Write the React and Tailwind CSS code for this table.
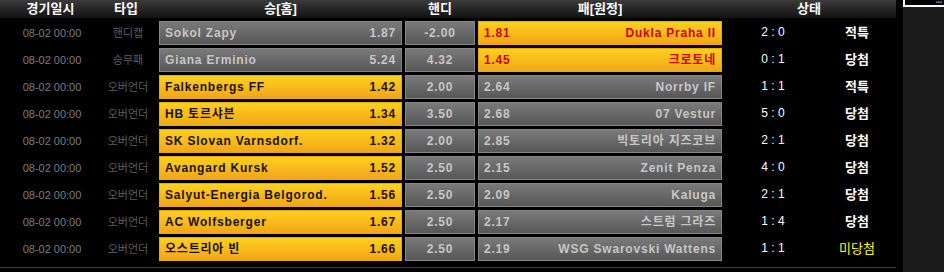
const rows = [
  { date: '08-02 00:00', type: '핸디캡', home: 'Sokol Zapy', ho: '1.87', hd: '-2.00', ao: '1.81', away: 'Dukla Praha II', score: '2 : 0', status: '적특', pick: 'away' },
  { date: '08-02 00:00', type: '승무패', home: 'Giana Erminio', ho: '5.24', hd: '4.32', ao: '1.45', away: '크로토네', score: '0 : 1', status: '당첨', pick: 'away' },
  { date: '08-02 00:00', type: '오버언더', home: 'Falkenbergs FF', ho: '1.42', hd: '2.00', ao: '2.64', away: 'Norrby IF', score: '1 : 1', status: '적특', pick: 'home' },
  { date: '08-02 00:00', type: '오버언더', home: 'HB 토르샤븐', ho: '1.34', hd: '3.50', ao: '2.68', away: '07 Vestur', score: '5 : 0', status: '당첨', pick: 'home' },
  { date: '08-02 00:00', type: '오버언더', home: 'SK Slovan Varnsdorf.', ho: '1.32', hd: '2.00', ao: '2.85', away: '빅토리아 지즈코브', score: '2 : 1', status: '당첨', pick: 'home' },
  { date: '08-02 00:00', type: '오버언더', home: 'Avangard Kursk', ho: '1.52', hd: '2.50', ao: '2.15', away: 'Zenit Penza', score: '4 : 0', status: '당첨', pick: 'home' },
  { date: '08-02 00:00', type: '오버언더', home: 'Salyut-Energia Belgorod.', ho: '1.56', hd: '2.50', ao: '2.09', away: 'Kaluga', score: '2 : 1', status: '당첨', pick: 'home' },
  { date: '08-02 00:00', type: '오버언더', home: 'AC Wolfsberger', ho: '1.67', hd: '2.50', ao: '2.17', away: '스트럼 그라즈', score: '1 : 4', status: '당첨', pick: 'home' },
  { date: '08-02 00:00', type: '오버언더', home: '오스트리아 빈', ho: '1.66', hd: '2.50', ao: '2.19', away: 'WSG Swarovski Wattens', score: '1 : 1', status: '미당첨', pick: 'home' },
]

const gray = 'border border-[#858585] bg-gradient-to-b from-[#7a7a7a] to-[#575757] text-[#c6c6c6]'
const gold = 'border border-[#eaa80e] bg-gradient-to-b from-[#fdd01e] to-[#f2a619]'

function Cell({ picked, red, className, children }) {
  const tone = picked ? gold + (red ? ' text-[#d40000]' : ' text-[#1a1200]') : gray
  return (
    <div className={`h-[24px] flex items-center px-[5px] font-bold text-[12px] tracking-[0.8px] whitespace-nowrap ${tone} ${className}`}>
      {children}
    </div>
  )
}

function Row({ r }) {
  const homePick = r.pick === 'home'
  const awayPick = r.pick === 'away'
  return (
    <div className="flex items-center h-[24px]">
      <div className="w-[104px] text-center text-[11px] text-[#7c7c7c] whitespace-nowrap">{r.date}</div>
      <div className="w-[48px] text-center text-[11px] text-[#5e5e5e] whitespace-nowrap">{r.type}</div>
      <div className="w-[7px]" />
      <Cell picked={homePick} className="w-[243px] justify-between">
        <span>{r.home}</span>
        <span>{r.ho}</span>
      </Cell>
      <div className="w-[3px]" />
      <Cell picked={false} className="w-[70px] justify-center">{r.hd}</Cell>
      <div className="w-[3px]" />
      <Cell picked={awayPick} red className="w-[244px] justify-between">
        <span>{r.ao}</span>
        <span>{r.away}</span>
      </Cell>
      <div className="w-[102px] text-center text-[12px] text-white pb-[2px] whitespace-nowrap">{r.score}</div>
      <div className={`w-[66px] text-center text-[13px] whitespace-nowrap ${r.status === '미당첨' ? 'text-[#ffff00]' : 'text-white font-bold'}`}>
        {r.status}
      </div>
    </div>
  )
}

export default function App() {
  return (
    <div
      className="w-[944px] h-[272px] bg-black flex overflow-hidden"
      style={{ fontFamily: '"Liberation Sans", "Noto Sans CJK KR", sans-serif' }}
    >
      <div className="w-[896px] flex flex-col">
        <div className="h-[18px] flex items-center bg-gradient-to-b from-[#3c3c3c] to-[#121212] text-white font-bold text-[13px] whitespace-nowrap">
          <div className="w-[101px] text-center">경기일시</div>
          <div className="w-[50px] text-center">타입</div>
          <div className="w-[8px]" />
          <div className="w-[243px] text-center">승[홈]</div>
          <div className="w-[3px]" />
          <div className="w-[70px] text-center">핸디</div>
          <div className="w-[3px]" />
          <div className="w-[244px] text-center">패[원정]</div>
          <div className="w-[174px] text-center">상태</div>
        </div>
        <div className="flex flex-col gap-[3px] pt-[3px]">
          {rows.map((r, i) => (
            <Row key={i} r={r} />
          ))}
        </div>
        <div className="mt-[6px] h-px bg-[#3a3a3a]" />
      </div>
      <div className="w-[7px]" />
      <div className="flex-1 bg-[#1c1c1c]">
        <div className="h-[7px] border-l-2 border-b-2 border-white bg-black flex justify-end items-start">
          <span className="text-[6px] leading-[4px] text-[#999] pr-[2px]">▪▪▪</span>
        </div>
      </div>
    </div>
  )
}
